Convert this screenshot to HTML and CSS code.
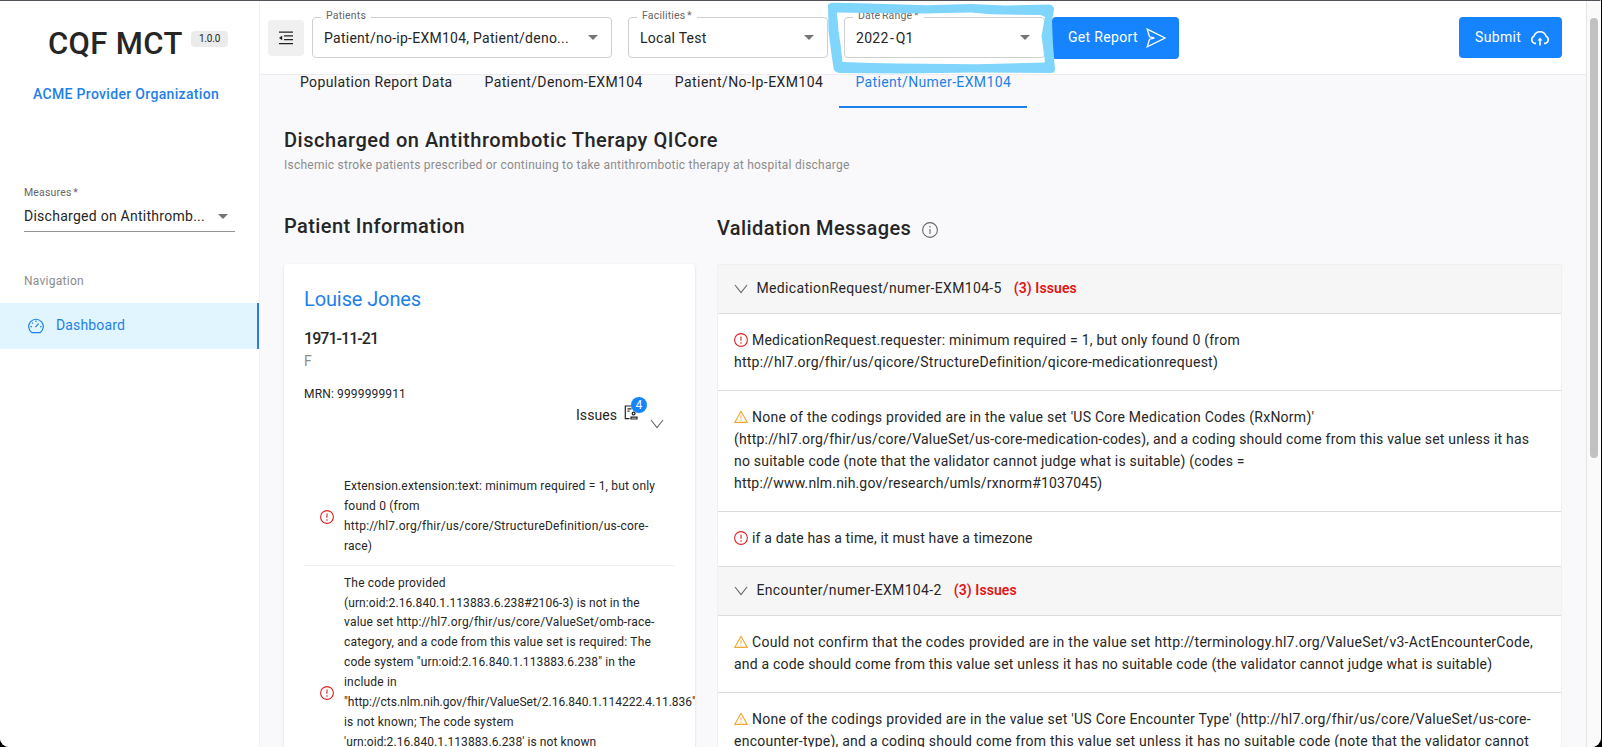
FILE: index.html
```html
<!DOCTYPE html>
<html lang="en">
<head>
<meta charset="utf-8">
<title>CQF MCT</title>
<link rel="stylesheet" href="styles.css">
</head>
<body>
<svg class="defs" aria-hidden="true">
  <symbol id="error" viewBox="0 0 14 14"><circle cx="7" cy="7" r="6.4" fill="none" stroke="currentColor" stroke-width="1.1"/><path d="M7 3.4v4.4M7 9.2v1.5" stroke="currentColor" stroke-width="1.1"/></symbol>
  <symbol id="warning" viewBox="0 0 14 14"><path d="M7 1.3L13.3 12.4H.7z" fill="none" stroke="currentColor" stroke-width="1.1" stroke-linejoin="round"/><path d="M7 5.2v3.6M7 9.8v1.2" stroke="currentColor" stroke-width=".9"/></symbol>
  <symbol id="down" viewBox="0 0 14 10"><path d="M1 1l6 7.6L13 1" fill="none" stroke="currentColor" stroke-width="1.1"/></symbol>
</svg>
<div class="app">
  <aside class="sidebar">
    <div class="brand"><h1>CQF MCT</h1><span class="version">1.0.0</span></div>
    <p class="org">ACME Provider Organization</p>
    <div class="measures">
      <label class="measures-label">Measures *</label>
      <div class="measures-value"><span>Discharged on Antithromb...</span><i class="caret"></i></div>
    </div>
    <p class="nav-title">Navigation</p>
    <a class="nav-item">
      <svg class="gauge" viewBox="0 0 16 16" fill="none" stroke="currentColor" stroke-width="1.2"><path d="M3.4 14.2A7.3 7.3 0 1 1 12.6 14.2Q12.2 14.6 11.6 14.6H4.4Q3.8 14.6 3.4 14.2z"/><path d="M7.4 9.2L10.6 5.6M8 2.6v1.5M2.4 8.6h1.5M12.1 8.6h1.5M4 4.6l1.1 1.1"/></svg>
      <span>Dashboard</span>
    </a>
  </aside>
  <div class="page">
    <header class="topbar">
      <button class="menu"><svg viewBox="0 0 16 14" width="16" height="14"><path d="M1 1.2h14M6 4.9h9M6 8.7h9M1 12.6h14" stroke="#222" stroke-width="1.3"/><path d="M4.2 4.6v4.6L1 6.9z" fill="#222"/></svg></button>
      <div class="select patients"><span class="label">Patients</span><span class="value">Patient/no-ip-EXM104, Patient/deno...</span><i class="caret"></i></div>
      <div class="select facility"><span class="label">Facilities *</span><span class="value">Local Test</span><i class="caret"></i></div>
      <div class="select range"><span class="label">Date Range *</span><span class="value">2022 - Q1</span><i class="caret"></i>
        <svg class="marker" viewBox="0 0 232 75"><path fill-rule="evenodd" d="M1 4Q2 2 6 1.8L34 2.2 100 4.2 144 3 178 4.6 222 3.6Q227 4.5 227 8L225 20 226 44 228 68Q228 72 224 72L150 71.4 74 72.4 12 72Q7 71 6.5 67L4 50 1.5 30zM10 11.5L40 12 97 12.5 144 11.5 164 13.3 214 14 218 16 214.5 35 217 53 218 61.5 150 63.3 72 62.6 44 62 15.5 61 13.5 43 11.5 30z"/></svg>
      </div>
      <button class="primary report"><span>Get Report</span><svg viewBox="0 0 20 20" width="20" height="20" fill="none" stroke="#fff" stroke-width="1.3"><path d="M1.2 1.2L19 10 1.2 18.8 3.5 11.2 8.3 10 3.5 8.8z"/></svg></button>
      <button class="primary submit"><span>Submit</span><svg viewBox="0 0 20 16" width="20" height="16" fill="none" stroke="#fff" stroke-width="1.6"><path d="M6 13.4H4.7A3.9 3.9 0 0 1 4 6.1 6.3 6.3 0 0 1 16 6.1 3.9 3.9 0 0 1 15.3 13.4H14M10 15.4V9"/><path d="M7.6 10.4L10 7.6l2.4 2.8z" fill="#fff" stroke="none"/></svg></button>
    </header>
    <main class="content">
      <nav class="tabs">
        <a class="tab">Population Report Data</a><a class="tab">Patient/Denom-EXM104</a><a class="tab wide">Patient/No-Ip-EXM104</a><a class="tab active">Patient/Numer-EXM104</a>
      </nav>
      <h2 class="title">Discharged on Antithrombotic Therapy QICore</h2>
      <p class="subtitle">Ischemic stroke patients prescribed or continuing to take antithrombotic therapy at hospital discharge</p>
      <div class="columns">
        <section class="left">
          <h2>Patient Information</h2>
          <div class="card">
            <h3>Louise Jones</h3>
            <p class="dob">1971-11-21</p>
            <p class="sex">F</p>
            <p class="mrn">MRN: 9999999911</p>
            <div class="issues"><span>Issues</span>
              <span class="badge-wrap"><svg viewBox="0 0 14 15" width="14" height="15" fill="none" stroke="#222" stroke-width="1.2"><path d="M5.5 13.6H1.3V1h10.4v4M3.5 3.8h4M3.5 6.2h2"/><circle cx="9.6" cy="8.6" r="1.4"/><path d="M7 14h6v-1.8H7z"/></svg><b class="badge">4</b></span>
              <svg class="expand" viewBox="0 0 14 10"><use href="#down"/></svg>
            </div>
            <ul class="problems">
              <li><svg class="ic error"><use href="#error"/></svg><p>Extension.extension:text: minimum required = 1, but only<br>found 0 (from<br><span class="ls23">http://hl7.org/fhir/us/core/StructureDefinition/us-core-</span><br>race)</p></li>
              <li><svg class="ic error"><use href="#error"/></svg><p>The code provided<br><span class="ls08">(urn:oid:2.16.840.1.113883.6.238#2106-3) is not in the</span><br>value set http://hl7.org/fhir/us/core/ValueSet/omb-race-<br>category, and a code from this value set is required: The<br><span class="ls13">code system "urn:oid:2.16.840.1.113883.6.238" in the</span><br>include in<br><span class="ls0">"http://cts.nlm.nih.gov/fhir/ValueSet/2.16.840.1.114222.4.11.836"</span><br>is not known; The code system<br><span class="ls08">'urn:oid:2.16.840.1.113883.6.238' is not known</span></p></li>
            </ul>
          </div>
        </section>
        <section class="right">
          <h2>Validation Messages<svg viewBox="0 0 16 16" width="16" height="16" fill="none" stroke="#666" stroke-width="1.1"><circle cx="8" cy="8" r="7.4"/><path d="M8 7v5M8 4v1.4"/></svg></h2>
          <div class="panel">
            <div class="group"><svg><use href="#down"/></svg><span>MedicationRequest/numer-EXM104-5</span><b>(3) Issues</b></div>
            <p class="msg"><svg class="ic error"><use href="#error"/></svg><span class="ls23">MedicationRequest.requester: minimum required = 1, but only found 0 (from</span><br><span class="ls25">http://hl7.org/fhir/us/qicore/StructureDefinition/qicore-medicationrequest)</span></p>
            <p class="msg"><svg class="ic warning"><use href="#warning"/></svg><span class="ls25">None of the codings provided are in the value set 'US Core Medication Codes (RxNorm)'</span><br>(http://hl7.org/fhir/us/core/ValueSet/us-core-medication-codes), and a coding should come from this value set unless it has<br>no suitable code (note that the validator cannot judge what is suitable) (codes =<br><span class="ls16">http://www.nlm.nih.gov/research/umls/rxnorm#1037045)</span></p>
            <p class="msg"><svg class="ic error"><use href="#error"/></svg><span class="ls16">if a date has a time, it must have a timezone</span></p>
            <div class="group"><svg><use href="#down"/></svg><span>Encounter/numer-EXM104-2</span><b>(3) Issues</b></div>
            <p class="msg"><svg class="ic warning"><use href="#warning"/></svg><span class="ls29">Could not confirm that the codes provided are in the value set http://terminology.hl7.org/ValueSet/v3-ActEncounterCode,</span><br>and a code should come from this value set unless it has no suitable code (the validator cannot judge what is suitable)</p>
            <p class="msg"><svg class="ic warning"><use href="#warning"/></svg><span class="ls26">None of the codings provided are in the value set 'US Core Encounter Type' (http://hl7.org/fhir/us/core/ValueSet/us-core-</span><br><span class="ls24">encounter-type), and a coding should come from this value set unless it has no suitable code (note that the validator cannot</span></p>
          </div>
        </section>
      </div>
    </main>
  </div>
  <div class="scroll"><i class="thumb"></i></div>
</div>
</body>
</html>
```

FILE: styles.css
```css
* { box-sizing: border-box; margin: 0; padding: 0; }
body { background: #000; color: #262626; font: 14px/22px Roboto, "Open Sans", sans-serif; letter-spacing: .207px; overflow: hidden; }
button { border: 0; font: inherit; letter-spacing: .33px; }
.defs { position: absolute; width: 0; height: 0; }
.app { display: flex; width: 1601px; height: 747px; background: #f9f9fb; border-top: 1px solid #535157; border-right: 1px solid #fff; border-radius: 0 0 9px 9px; overflow: hidden; }

.ls0 { letter-spacing: 0; }
.ls08 { letter-spacing: .09px; }
.ls13 { letter-spacing: .135px; }
.ls16 { letter-spacing: .167px; }
.ls23 { letter-spacing: .233px; }
.ls24 { letter-spacing: .241px; }
.ls25 { letter-spacing: .25px; }
.ls26 { letter-spacing: .262px; }
.ls29 { letter-spacing: .28px; }

.sidebar { width: 260px; flex: none; background: #fff; border-right: 1px solid #f0f0f0; }
.brand { display: flex; padding: 24px 0 0 48px; height: 75px; gap: 9px; }
.brand h1 { font-size: 31px; line-height: 38px; font-weight: 500; width: 134px; white-space: nowrap; letter-spacing: .35px; }
.version { width: 37px; height: 16px; margin-top: 6px; background: #ebebeb; border-radius: 4px; font-size: 10px; line-height: 16px; text-align: center; letter-spacing: -.2px; }
.org { padding-left: 33px; margin-top: 7px; color: #1e80ec; font-weight: 500; letter-spacing: .32px; }
.measures { margin: 82px 24px 0; border-bottom: 1px solid #949494; height: 45px; }
.measures-label { display: block; font-size: 10.5px; line-height: 12px; color: #666; letter-spacing: .18px; word-spacing: -1px; }
.measures-value { display: flex; justify-content: space-between; align-items: center; padding: 0 7px 0 0; margin-top: 6px; white-space: nowrap; letter-spacing: .264px; }
.caret { width: 0; height: 0; border: 5px solid transparent; border-top-color: #757575; border-bottom: 0; }
.nav-title { font-size: 12px; line-height: 20px; color: #8c8c8c; margin: 39px 24px 0; letter-spacing: .27px; }
.nav-item { display: flex; align-items: center; gap: 12px; height: 46px; margin-top: 12px; padding-left: 28px; background: #e0f5ff; border-right: 2px solid #2f7bd6; color: #1e80ec; letter-spacing: .14px; }
.nav-item span { padding-bottom: 2px; }
.gauge { width: 16px; height: 16px; }

.page { flex: 1; min-width: 0; display: flex; flex-direction: column; }
.topbar { display: flex; height: 74px; flex: none; padding: 16px 24px 0 8px; background: #fff; border-bottom: 1px solid #ededf0; }
.menu { width: 36px; height: 36px; margin: 3px 8px 0 0; background: #f0f0f0; border-radius: 4px; display: grid; place-items: center; }
.select { position: relative; display: flex; justify-content: space-between; align-items: center; height: 41px; border: 1px solid #cfcfcf; border-radius: 4px; padding: 0 13px 0 11px; white-space: nowrap; margin-right: 16px; letter-spacing: .26px; }
.patients { width: 300px; }
.facility { width: 200px; }
.range { width: 201px; margin-right: 8px; padding-right: 14px; }
.range .value { word-spacing: -2.2px; }
.label { position: absolute; left: 8px; top: -8px; padding: 0 5px; background: #fff; font-size: 10.5px; line-height: 12px; color: #666; letter-spacing: .19px; word-spacing: -1.2px; }
.marker { position: absolute; left: -18px; top: -17px; width: 232px; height: 75px; fill: #80d5fd; }
.primary { display: flex; align-items: center; height: 41px; border-radius: 4px; background: #1684ff; color: #fff; gap: 8px; padding-left: 16px; }
.primary span { padding-bottom: 2px; }
.report { width: 127px; height: 42px; margin-left: -1px; }
.submit { width: 103px; margin-left: auto; gap: 9px; }

.content { padding: 0 24px; flex: 1; min-height: 0; overflow: hidden; }
.tabs { display: flex; height: 33px; }
.tab { padding: 0 16px; line-height: 14px; font-weight: 450; letter-spacing: .365px; }
.tab.wide { letter-spacing: .44px; }
.tab.active { color: #1e80ec; border-bottom: 2px solid #1e80ec; }
h2 { font-size: 20px; line-height: 28px; font-weight: 500; white-space: nowrap; letter-spacing: .54px; }
.title { margin-top: 18px; }
.subtitle { font-size: 12px; line-height: 20px; color: #8c8c8c; margin-top: 1px; letter-spacing: .239px; }
.columns { display: flex; gap: 22px; margin-top: 36px; }
.left { width: 411px; flex: none; }
.right { flex: 1; min-width: 0; }
.right h2 { display: flex; align-items: center; gap: 11px; height: 53px; padding-bottom: 20px; letter-spacing: .4px; }
.right h2 svg { margin-top: 5px; }
.left h2 { height: 53px; padding-top: 1px; letter-spacing: .4px; }
.card { height: 600px; background: #fff; border-radius: 4px; box-shadow: 0 1px 3px rgba(0,0,0,.13); padding: 20px; overflow: hidden; }
.card h3 { font-size: 20px; line-height: 30px; font-weight: 400; color: #1e80ec; letter-spacing: -.11px; }
.dob { font-size: 16px; line-height: 24px; font-weight: 500; margin-top: 13px; letter-spacing: -.96px; }
.sex { color: #8c8c8c; line-height: 20px; }
.mrn { font-size: 12px; line-height: 20px; margin-top: 13px; letter-spacing: .15px; }
.issues { display: flex; align-items: flex-start; justify-content: flex-end; height: 65px; padding-right: 11px; letter-spacing: .06px; }
.badge-wrap { position: relative; width: 14px; height: 15px; margin: 1px 12px 0 7px; display: flex; }
.badge { position: absolute; left: 7px; top: -8px; width: 16px; height: 16px; border-radius: 8px; background: #1684ff; color: #fff; font-size: 12px; line-height: 16px; font-weight: 400; text-align: center; }
.expand { width: 14px; height: 10px; margin-top: 15px; color: #666; }
.problems { list-style: none; font-size: 12px; line-height: 19.9px; white-space: nowrap; letter-spacing: .19px; }
.problems li { display: flex; align-items: center; gap: 10px; padding: 8px 0 8px 16px; border-bottom: 1px solid #eee; }
.problems li + li { min-height: 256px; }
.problems li + li p { align-self: flex-start; }
.ic { width: 14px; height: 14px; flex: none; }
.msg .ic { vertical-align: -2px; margin-right: 4px; }
.error { color: #db2323; }
.warning { color: #f2a52b; }
.panel { border: 1px solid #f0f0f0; background: #fff; white-space: nowrap; height: 600px; }
.group { display: flex; align-items: center; height: 49px; padding-left: 16px; background: #f6f6f6; border-bottom: 1px solid #dcdcdc; letter-spacing: .34px; }
.group > span, .group b { padding-bottom: 2px; }
.group svg { width: 14px; height: 10px; margin-right: 8.5px; color: #666; }
.group b { color: #e01414; font-weight: 600; margin-left: 12px; letter-spacing: .08px; }
.msg { padding: 15px 16px 17px; border-bottom: 1px solid #dcdcdc; }
.scroll { width: 14px; background: #fafafa; border-left: 1px solid #e5e5e5; padding: 17px 0 0 3px; flex: none; }
.thumb { display: block; width: 8px; height: 440px; border-radius: 4px; background: #c1c1c1; }
```
